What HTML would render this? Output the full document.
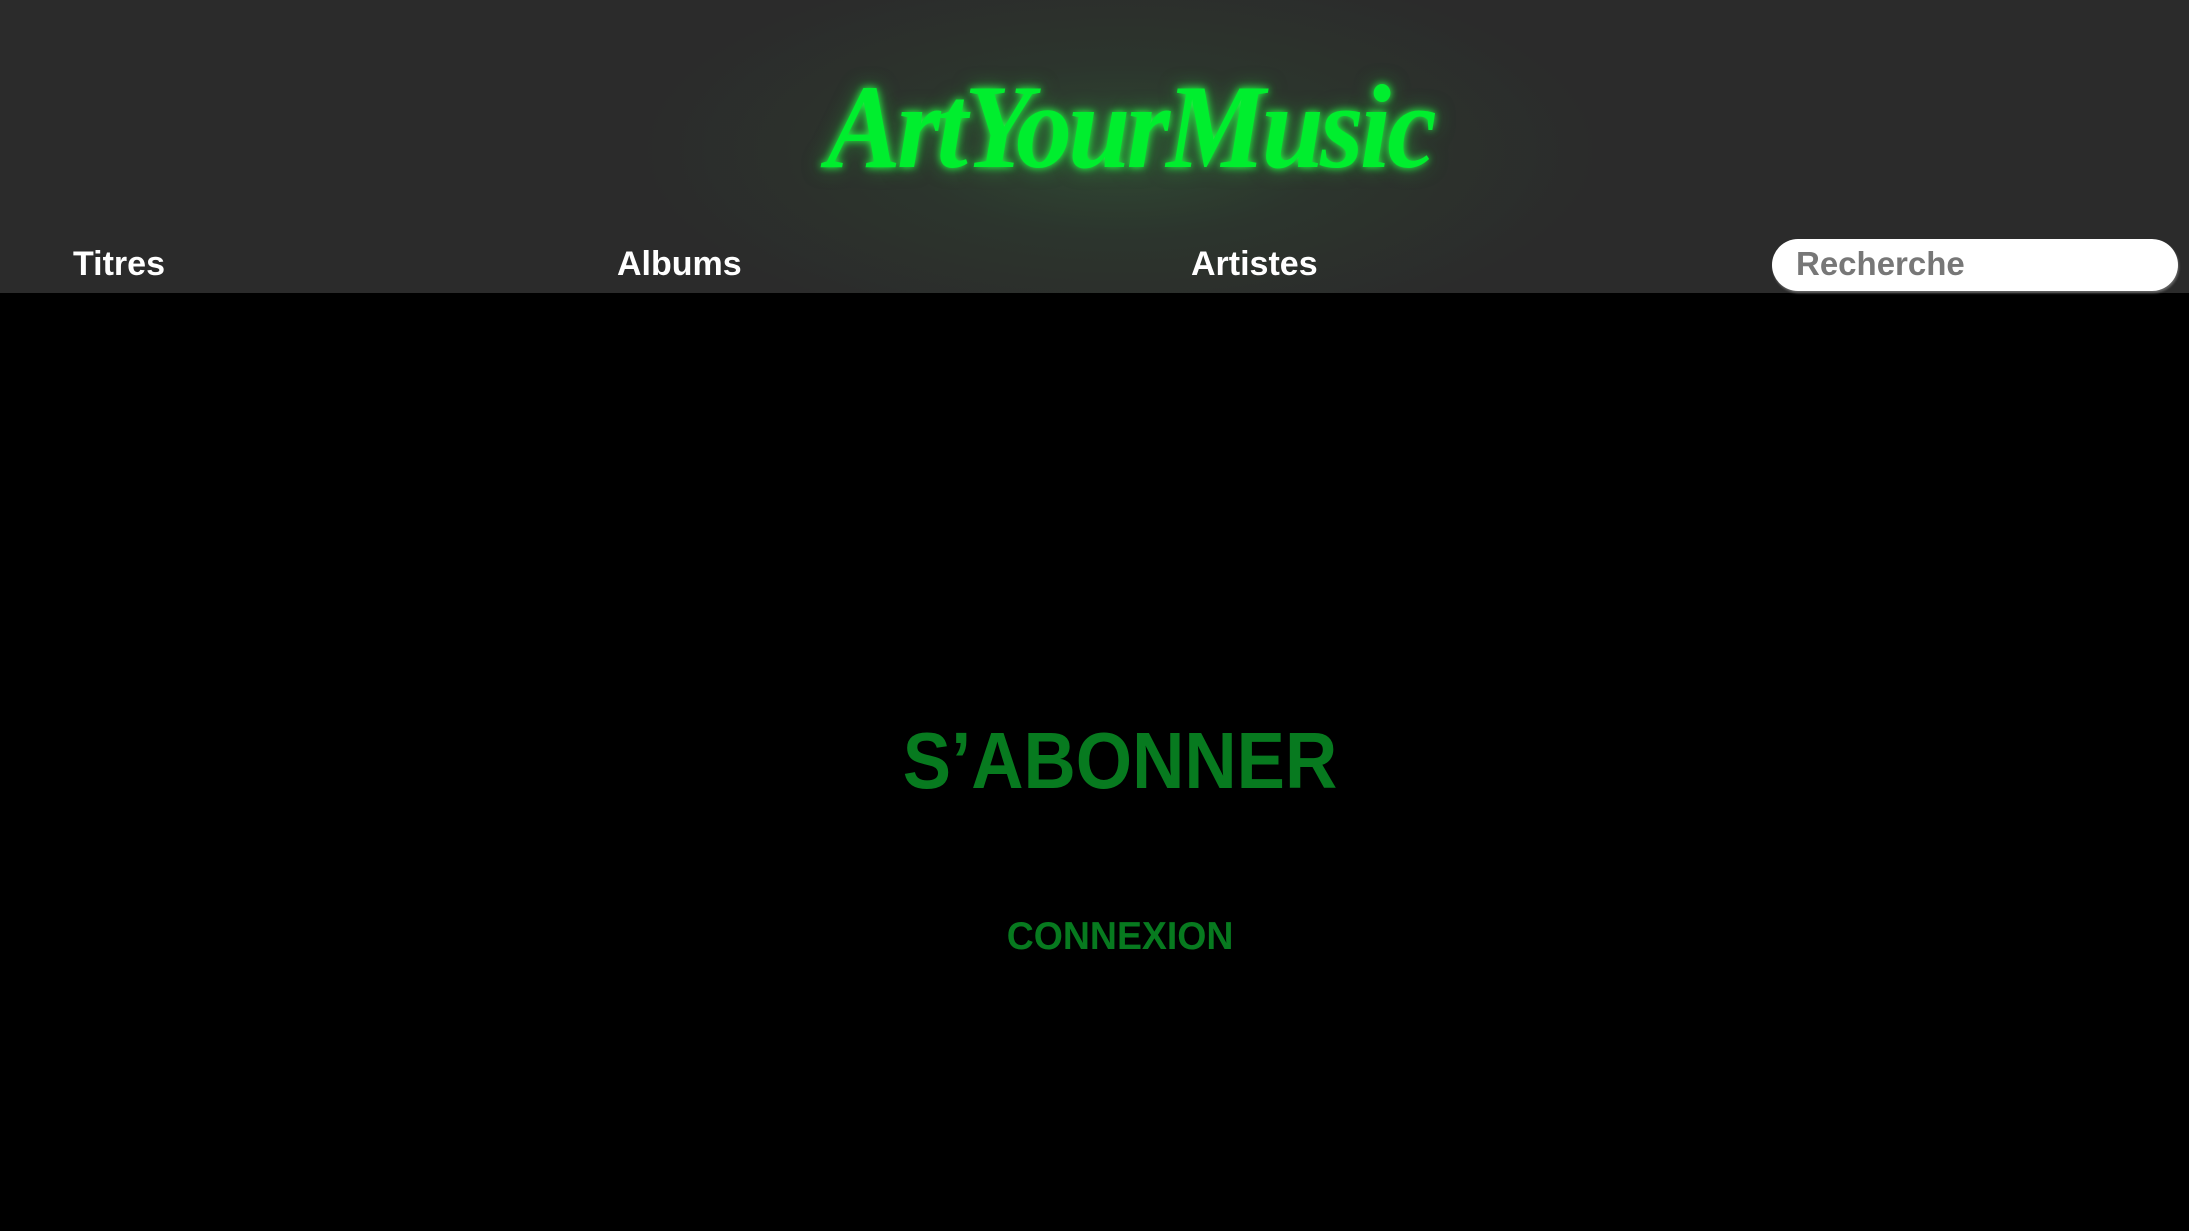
<!DOCTYPE html>
<html><head><meta charset="utf-8"><style>
html,body{margin:0;padding:0;width:2189px;height:1231px;background:#000;overflow:hidden;font-family:"Liberation Sans",sans-serif}
.hdr{position:absolute;left:0;top:0;width:2189px;height:293px;background:radial-gradient(ellipse 480px 190px at 1120px 150px,#2f4a33 0%,#2c352d 45%,#2b2b2b 100%)}
.logo{position:absolute;left:805px;top:58px;width:610px;text-align:center;font-family:"Liberation Serif",serif;font-style:italic;font-weight:bold;font-size:120px;color:#00ee2e;text-shadow:0 0 8px #22ff44,0 0 20px rgba(40,200,60,.6);letter-spacing:-4px;white-space:nowrap;transform:scaleX(.93);transform-origin:center}
.nav{position:absolute;top:245px;font-weight:bold;font-size:34px;color:#fff}
.search{position:absolute;left:1772px;top:239px;width:406px;height:52px;background:#fff;border-radius:26px;box-shadow:1px 2px 2px #666}
.search span{position:absolute;left:24px;top:6px;font-weight:bold;font-size:33px;color:#777}
.big{position:absolute;left:0;width:2189px;text-align:center;color:#077a1f;font-weight:bold}
.big span{display:inline-block}
</style></head><body>
<div class="hdr">
<div class="logo">ArtYourMusic</div>
<div class="nav" style="left:73px">Titres</div>
<div class="nav" style="left:617px">Albums</div>
<div class="nav" style="left:1191px">Artistes</div>
<div class="search"><span>Recherche</span></div>
</div>
<div class="big" style="top:715px;font-size:80px;left:26px"><span style="transform:scaleX(.905)">S’ABONNER</span></div>
<div class="big" style="top:915px;font-size:39px;left:26px"><span style="transform:scaleX(.96)">CONNEXION</span></div>
</body></html>
